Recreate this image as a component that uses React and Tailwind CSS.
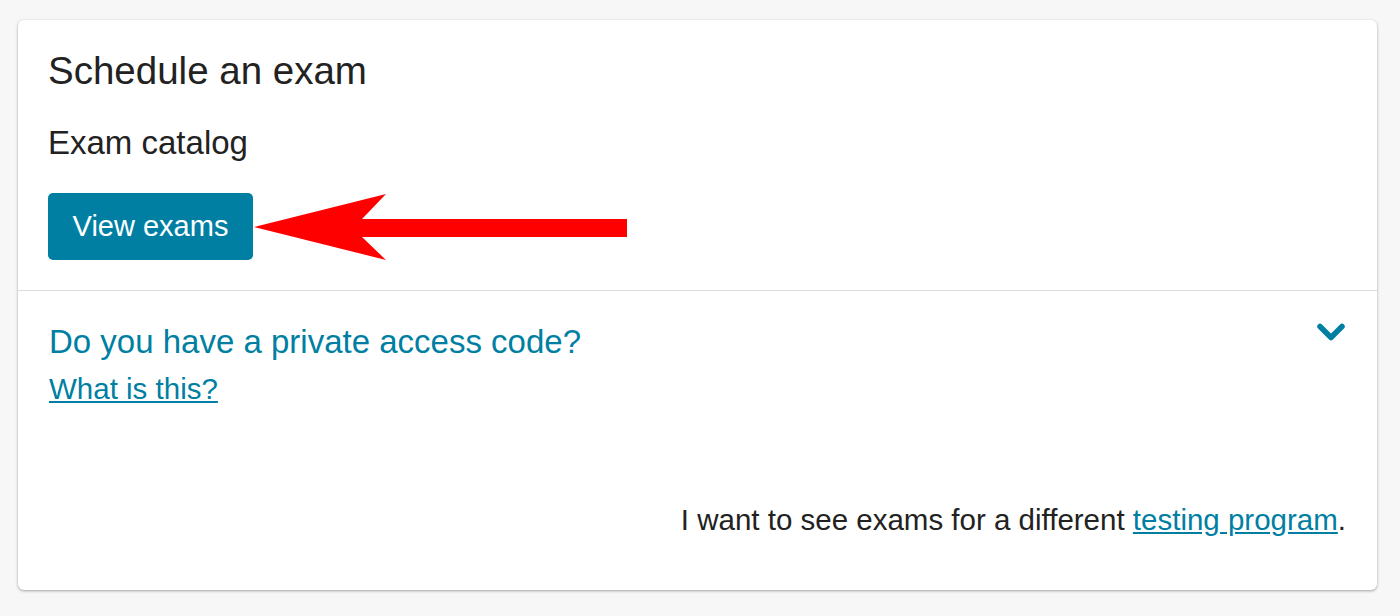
import { ChevronDown } from "lucide-react";

export default function App() {
  return (
    <div
      className="min-h-[616px] w-[1400px] bg-[#f7f7f7] pt-[20px] pl-[18px]"
      style={{ fontFamily: '"Liberation Sans", Arial, sans-serif' }}
    >
      {/* CARD */}
      <div className="flex h-[570px] w-[1359px] flex-col rounded-[6px] bg-white shadow-[0_1px_3px_rgba(0,0,0,0.35)]">
        {/* SCHEDULE */}
        <div className="pl-[30px] pt-[28px] pb-[30px]">
          <h1 className="text-[38.5px] leading-[46px] text-[#222]">
            Schedule an exam
          </h1>

          <h2 className="mt-[29px] text-[33px] leading-[40px] text-[#222]">
            Exam catalog
          </h2>

          <div className="mt-[30px] flex items-center">
            <button className="flex h-[67px] w-[205px] items-center justify-center rounded-[5px] bg-[#007fa3] text-[29px] text-white">
              View exams
            </button>

            {/* ARROW */}
            <svg
              width="373"
              height="67"
              viewBox="0 0 373 67"
              className="ml-[1px]"
            >
              <polygon
                points="0,34 132,1 108,26 373,26 373,44 108,44 132,67"
                fill="#ff0000"
              />
            </svg>
          </div>
        </div>

        {/* ACCESS CODE */}
        <div className="flex justify-between border-t border-[#dcdcdc] pl-[31px] pr-[24px] pt-[31px]">
          <div>
            <p className="text-[33px] leading-[40px] text-[#007fa3]">
              Do you have a private access code?
            </p>
            <a
              href="#"
              className="mt-[9px] block text-[29.5px] leading-[36px] text-[#007fa3] underline"
            >
              What is this?
            </a>
          </div>

          <ChevronDown
            size={44}
            strokeWidth={3}
            className="mt-[-12px] text-[#007fa3]"
          />
        </div>

        {/* FOOTER */}
        <div className="mt-auto pb-[52px] pr-[31px] text-right text-[29.5px] leading-[36px] text-[#222]">
          I want to see exams for a different{" "}
          <a href="#" className="text-[#007fa3] underline">
            testing program
          </a>
          .
        </div>
      </div>
    </div>
  );
}
